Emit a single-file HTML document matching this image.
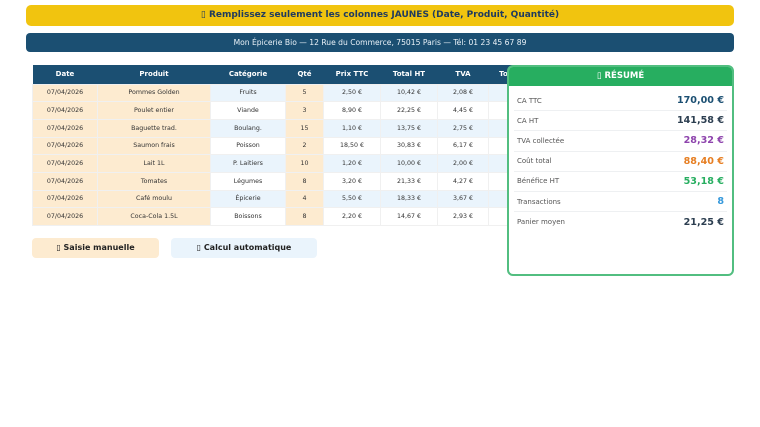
<!DOCTYPE html>
<html><head><meta charset="utf-8"><style>
*{margin:0;padding:0;box-sizing:border-box}
body{width:760px;height:427px;background:#fff;font-family:"DejaVu Sans","Liberation Sans",sans-serif;position:relative;overflow:hidden}
.ban{position:absolute;left:26px;top:5px;width:708px;height:21px;background:#f1c40f;border-radius:5px;text-align:center;font-size:9px;font-weight:bold;color:#1e3a5f;line-height:21px}
.bar{position:absolute;left:26px;top:33px;width:708px;height:19px;background:#1b4f72;border-radius:4px;text-align:center;font-size:7.6px;color:#eaf2f8;line-height:19px}
table{position:absolute;left:32px;top:65px;border-collapse:collapse;font-size:6.3px;color:#333}
th{background:#1b4f72;color:#fff;font-weight:bold;font-size:7px;height:19px}
td{height:17.7px;text-align:center;border:1px solid #f0f0f0}
.y{background:#fdebd0}
.b{background:#eaf4fc}
.w{background:#fff}
.card{position:absolute;left:507px;top:65px;width:227px;height:211px;border:2px solid #52be80;border-radius:6px;background:#fff;overflow:hidden}
.ch{background:#27ae60;height:19px;color:#fff;font-weight:bold;font-size:8.5px;text-align:center;line-height:19px}
.r{margin:0 5px;height:20.2px;border-bottom:1px solid #eef0f2;display:flex;justify-content:space-between;align-items:center;padding:0 3px}
.r span:first-child{font-size:7px;color:#555}
.r span:last-child{font-size:9.6px;font-weight:bold}
.btn{position:absolute;top:238px;height:20px;border-radius:4px;font-size:8px;font-weight:bold;color:#222;text-align:center;line-height:20px}
</style></head><body>
<div class="ban">▯ Remplissez seulement les colonnes JAUNES (Date, Produit, Quantité)</div>
<div class="bar">Mon Épicerie Bio — 12 Rue du Commerce, 75015 Paris — Tél: 01 23 45 67 89</div>
<table>
<tr><th style="width:65px">Date</th><th style="width:113px">Produit</th><th style="width:75px">Catégorie</th><th style="width:38px">Qté</th><th style="width:57px">Prix TTC</th><th style="width:57px">Total HT</th><th style="width:51px">TVA</th><th style="width:30px">To</th></tr>
<tr><td class="y">07/04/2026</td><td class="y">Pommes Golden</td><td class="b">Fruits</td><td class="y">5</td><td class="b">2,50 €</td><td class="b">10,42 €</td><td class="b">2,08 €</td><td class="b"></td></tr>
<tr><td class="y">07/04/2026</td><td class="y">Poulet entier</td><td class="w">Viande</td><td class="y">3</td><td class="w">8,90 €</td><td class="w">22,25 €</td><td class="w">4,45 €</td><td class="w"></td></tr>
<tr><td class="y">07/04/2026</td><td class="y">Baguette trad.</td><td class="b">Boulang.</td><td class="y">15</td><td class="b">1,10 €</td><td class="b">13,75 €</td><td class="b">2,75 €</td><td class="b"></td></tr>
<tr><td class="y">07/04/2026</td><td class="y">Saumon frais</td><td class="w">Poisson</td><td class="y">2</td><td class="w">18,50 €</td><td class="w">30,83 €</td><td class="w">6,17 €</td><td class="w"></td></tr>
<tr><td class="y">07/04/2026</td><td class="y">Lait 1L</td><td class="b">P. Laitiers</td><td class="y">10</td><td class="b">1,20 €</td><td class="b">10,00 €</td><td class="b">2,00 €</td><td class="b"></td></tr>
<tr><td class="y">07/04/2026</td><td class="y">Tomates</td><td class="w">Légumes</td><td class="y">8</td><td class="w">3,20 €</td><td class="w">21,33 €</td><td class="w">4,27 €</td><td class="w"></td></tr>
<tr><td class="y">07/04/2026</td><td class="y">Café moulu</td><td class="b">Épicerie</td><td class="y">4</td><td class="b">5,50 €</td><td class="b">18,33 €</td><td class="b">3,67 €</td><td class="b"></td></tr>
<tr><td class="y">07/04/2026</td><td class="y">Coca-Cola 1.5L</td><td class="w">Boissons</td><td class="y">8</td><td class="w">2,20 €</td><td class="w">14,67 €</td><td class="w">2,93 €</td><td class="w"></td></tr>
</table>
<div class="btn" style="left:32px;width:127px;background:#fdebd0">▯ Saisie manuelle</div>
<div class="btn" style="left:171px;width:146px;background:#eaf4fc">▯ Calcul automatique</div>
<div class="card">
<div class="ch">▯ RÉSUMÉ</div>
<div style="height:5px"></div>
<div class="r"><span>CA TTC</span><span style="color:#1b4f72">170,00 €</span></div>
<div class="r"><span>CA HT</span><span style="color:#2c3e50">141,58 €</span></div>
<div class="r"><span>TVA collectée</span><span style="color:#8e44ad">28,32 €</span></div>
<div class="r"><span>Coût total</span><span style="color:#e67e22">88,40 €</span></div>
<div class="r"><span>Bénéfice HT</span><span style="color:#27ae60">53,18 €</span></div>
<div class="r"><span>Transactions</span><span style="color:#3498db">8</span></div>
<div class="r" style="border:none"><span>Panier moyen</span><span style="color:#2c3e50">21,25 €</span></div>
</div>
</body></html>
